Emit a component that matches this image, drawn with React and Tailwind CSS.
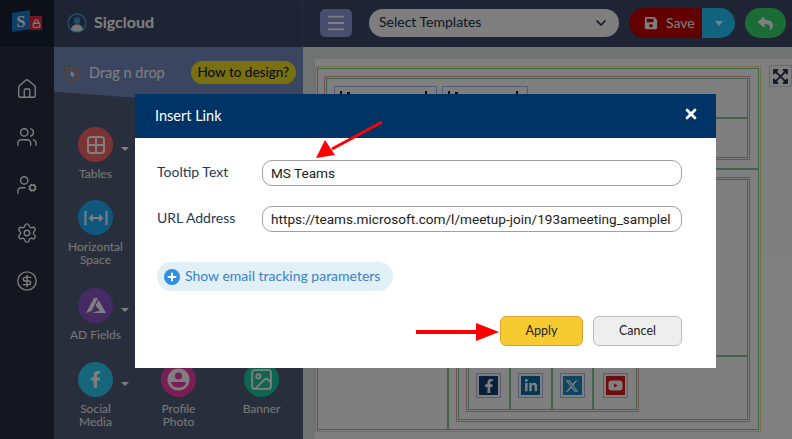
import React from 'react';
import { Home, Users, UserCog, Settings, CircleDollarSign, ChevronDown, Menu, X, Plus, Image, Lock } from 'lucide-react';
import { FaSave, FaReply, FaFacebookF, FaLinkedinIn, FaYoutube, FaExpandArrowsAlt } from 'react-icons/fa';
import { FaXTwitter } from 'react-icons/fa6';

const Tool = ({ bg, icon, label, caret }) => (
    <div className="relative flex flex-col items-center text-[12px] leading-[13px] text-center text-[#f2f2f2]">
        <div className={`w-[35px] h-[35px] rounded-full flex items-center justify-center text-white ${bg}`}>{icon}</div>
        {caret && <span className="absolute left-[67px] top-[20px] w-0 h-0 border-x-[4px] border-x-transparent border-t-[4px] border-t-white" />}
        <div className="mt-[5px]">{label}</div>
    </div>
);

const SocialCell = ({ bg, children, last }) => (
    <div className={`w-[42px] h-[47px] flex items-center justify-center ${last ? '' : 'border-r-2 border-[#7fc98f]'}`}>
        <div className="w-[25px] h-[25px] border border-[#a9b8f0] p-[2px]">
            <div className={`w-full h-full flex items-center justify-center text-white ${bg}`}>{children}</div>
        </div>
    </div>
);

// dropdown cell of the template, only its top edge shows above the dialog
const TemplateBox = ({ width }) => (
    <div className={`${width} h-[26px] border border-[#a9b8f0] flex justify-between pl-[5px] pr-[9px] pt-[4px]`}>
        <div className="flex gap-[5px]">
            <span className="w-[2px] h-[3px] bg-[#111]" />
            <span className="w-[3px] h-[2px] mt-px bg-[#111]" />
        </div>
        <span className="w-[2px] h-[3px] bg-[#111]" />
    </div>
);

const App = () => {
    return (
        <div className="relative w-[792px] h-[439px] overflow-hidden flex font-['Lato',sans-serif]">
            {/* icon rail */}
            <div className="w-[54px] bg-[#282e3e] flex flex-col items-center text-white shrink-0">
                <div className="w-full h-[47px] flex items-start pl-[12px] pt-[10px] bg-[#182030] shrink-0">
                    <svg width="18" height="22" viewBox="0 0 18 22">
                        <polygon points="0,3 18,0 18,19 0,22" fill="#1480d0" />
                        <text x="9" y="17" textAnchor="middle" fontSize="16" fontWeight="700" fill="white" fontFamily="Liberation Serif, serif">S</text>
                    </svg>
                    <div className="w-[12px] h-[14px] mt-[6px] bg-[#e8283c] flex items-center justify-center">
                        <Lock size={9} strokeWidth={3} />
                    </div>
                </div>
                <div className="flex flex-col items-center gap-[26px] pt-[31px]">
                    <Home size={22} strokeWidth={1.5} />
                    <Users size={22} strokeWidth={1.5} />
                    <UserCog size={22} strokeWidth={1.5} />
                    <Settings size={22} strokeWidth={1.5} />
                    <CircleDollarSign size={22} strokeWidth={1.5} />
                </div>
            </div>

            <div className="flex-1 flex flex-col min-w-0">
                {/* top bar */}
                <div className="h-[47px] bg-[#3c4866] flex items-center pb-px shrink-0">
                    <div className="w-[249px] flex items-center pl-[13px] gap-[7px] text-white border-r border-dotted border-[#5a6478] h-full">
                        <svg width="20" height="20" viewBox="0 0 20 20">
                            <circle cx="10" cy="10" r="9" fill="none" stroke="#3aa0d0" strokeWidth="1.5" />
                            <circle cx="10" cy="7.5" r="3.2" fill="#3aa0d0" />
                            <path d="M4 16.5c.6-3.6 3-5 6-5s5.4 1.4 6 5a9 9 0 0 1-12 0z" fill="#dfe8f0" />
                        </svg>
                        <span className="text-[16px] font-bold pb-[3px]">Sigcloud</span>
                    </div>
                    <div className="w-[32px] h-[28px] ml-[17px] rounded-[5px] bg-[#8f9fd8] flex items-center justify-center text-white">
                        <Menu size={22} strokeWidth={2} />
                    </div>
                    <div className="w-[250px] h-[28px] ml-[17px] rounded-full bg-[#fdfdfd] flex items-center justify-between px-[10px] text-[#1a2a44] text-[14px]">
                        <span className="pb-[3px]">Select Templates</span>
                        <ChevronDown size={16} strokeWidth={2.5} />
                    </div>
                    <div className="ml-[10px] h-[30px] w-[73px] rounded-l-full bg-[#c40000] flex items-center pl-[15px] gap-[8px] text-white text-[14px]">
                        <FaSave size={14} />
                        <span className="pb-[2px]">Save</span>
                    </div>
                    <div className="h-[30px] w-[33px] rounded-r-full bg-[#20c8ff] flex items-center justify-center">
                        <span className="w-0 h-0 border-x-[4px] border-x-transparent border-t-[5px] border-t-white" />
                    </div>
                    <div className="ml-[10px] h-[30px] w-[41px] rounded-full bg-[#38d870] flex items-center justify-center text-white">
                        <FaReply size={15} />
                    </div>
                </div>

                <div className="flex-1 flex min-h-0">
                    {/* tools panel */}
                    <div className="w-[249px] bg-[#505c78] shrink-0 flex flex-col overflow-hidden">
                        <div className="h-[63px] bg-[#748ac0] flex items-start pt-[14px] pl-[10px] text-white shrink-0 [clip-path:polygon(0_0,100%_0,100%_100%,0_71%)]">
                            <svg width="15" height="19" viewBox="0 0 15 19" className="mr-[10px] mt-[2px]">
                                <path d="M0 1h12" stroke="#30c040" strokeWidth="1.5" strokeDasharray="2 3" />
                                <rect x="3" y="5" width="11" height="12" fill="none" stroke="#f08030" strokeWidth="1.5" strokeDasharray="2 1" />
                                <path d="M7 8l4 3.5-2.2.4L9.6 14l-1 .3-.8-2L6.5 13z" fill="white" />
                            </svg>
                            <span className="text-[14.5px] leading-[23px]">Drag n drop</span>
                            <span className="ml-[26px] h-[23px] w-[105px] rounded-full bg-[#f4e020] text-[#12203a] text-[13.5px] font-medium flex items-center justify-center">How to design?</span>
                        </div>
                        <div className="grid grid-cols-3 grid-rows-[73px_88px_74px_1fr] pt-[17px]">
                            <Tool bg="bg-[#f86666]" label="Tables" caret icon={
                                <svg width="20" height="20" viewBox="0 0 20 20" fill="none" stroke="white" strokeWidth="2">
                                    <rect x="2" y="2" width="16" height="16" rx="3" />
                                    <path d="M10 2v16M2 10h16" />
                                </svg>
                            } />
                            <div />
                            <div />
                            <Tool bg="bg-[#1eaef8]" label={<>Horizontal<br />Space</>} icon={
                                <svg width="24" height="16" viewBox="0 0 24 16" fill="white" stroke="white">
                                    <path d="M1.5 1v14M22.5 1v14" strokeWidth="2" fill="none" />
                                    <path d="M7 8h10" strokeWidth="2" />
                                    <path d="M9 4L4.5 8 9 12zM15 4l4.5 4-4.5 4z" strokeWidth="0" />
                                </svg>
                            } />
                            <div />
                            <div />
                            <Tool bg="bg-[#8a54cc]" label="AD Fields" caret icon={
                                <svg width="20" height="16" viewBox="0 0 20 16" fill="white">
                                    <polygon points="8,0 12,0 5.5,13 0,15" />
                                    <polygon points="12.5,2 20,15 6,15 14,12.5 9.5,7.5" />
                                </svg>
                            } />
                            <div />
                            <div />
                            <Tool bg="bg-[#2ecef8]" label={<>Social<br />Media</>} caret icon={<FaFacebookF size={17} />} />
                            <Tool bg="bg-[#f43eaa]" label={<>Profile<br />Photo</>} icon={
                                <svg width="23" height="23" viewBox="0 0 23 23">
                                    <circle cx="11.5" cy="11.5" r="11" fill="white" />
                                    <circle cx="11.5" cy="8" r="3.6" fill="#f43eaa" />
                                    <path d="M4 14h15c0 3.6-3.4 5.6-7.5 5.6S4 17.6 4 14z" fill="#f43eaa" />
                                </svg>
                            } />
                            <Tool bg="bg-[#18cca0]" label="Banner" icon={<Image size={25} strokeWidth={1.8} />} />
                        </div>
                    </div>

                    {/* canvas */}
                    <div className="flex-1 bg-[#dfe8e6] pt-[12px] pl-[12px] min-w-0">
                        <div className="relative h-full bg-white pt-[7px]">
                            <div className="w-[446px] h-[366px] border border-[#f0e090] p-px">
                                <div className="h-full border border-[#7fc98f] pt-[7px] flex flex-col">
                                    <div className="ml-[6px] mr-[8px] h-[84px] border border-[#f0a0b0] p-px shrink-0">
                                        <div className="h-full border border-[#7fc98f]">
                                            <div className="h-[40px] border-b-2 border-[#7fc98f] pl-[7px] pt-[7px] flex gap-[5px]">
                                                <TemplateBox width="w-[103px]" />
                                                <TemplateBox width="w-[86px]" />
                                            </div>
                                        </div>
                                    </div>
                                    <div className="flex-1 flex mt-[8px] border-t-2 border-[#7fc98f] min-h-0">
                                        <div className="w-[131px] border-r-2 border-[#7fc98f]" />
                                        <div className="flex-1 pl-[7px] pr-[8px] pb-[7px] pt-[7px]">
                                            <div className="h-full border border-[#f0a0b0] p-px">
                                                <div className="h-full border border-[#7fc98f] flex flex-col">
                                                    <div className="flex-1 border-b-2 border-[#7fc98f]" />
                                                    <div className="pl-[7px] pb-[7px] pt-px">
                                                        <div className="w-[173px] border border-[#f0a0b0] p-px">
                                                            <div className="h-[50px] border border-[#7fc98f] flex items-end">
                                                                <SocialCell bg="bg-[#13407a]"><FaFacebookF size={14} /></SocialCell>
                                                                <SocialCell bg="bg-[#0a6ca8]"><FaLinkedinIn size={14} /></SocialCell>
                                                                <SocialCell bg="bg-[#1a8ac8]"><FaXTwitter size={14} /></SocialCell>
                                                                <SocialCell bg="bg-[#d81818]" last><FaYoutube size={15} /></SocialCell>
                                                            </div>
                                                        </div>
                                                    </div>
                                                </div>
                                            </div>
                                        </div>
                                    </div>
                                </div>
                            </div>
                            <div className="absolute left-[454px] top-[6px] w-[23px] h-[22px] border border-[#cfd4d8] flex items-center justify-center text-[#2a3450]">
                                <FaExpandArrowsAlt size={17} />
                            </div>
                        </div>
                    </div>
                </div>
            </div>

            {/* dim layer */}
            <div className="absolute inset-0 bg-black/50" />

            {/* modal */}
            <div className="absolute left-[135px] top-[94px] w-[581px] h-[274px] bg-white flex flex-col">
                <div className="h-[44px] bg-[#003366] flex items-center justify-between pl-[20px] pr-[17px] text-white shrink-0">
                    <span className="text-[14.5px]">Insert Link</span>
                    <X size={16} strokeWidth={4} className="mb-[5px]" />
                </div>
                <div className="flex-1 pl-[22px] pr-[34px] pt-[22px]">
                    <div className="flex items-center h-[26px] text-[14px] text-[#1e3a55]">
                        <label className="w-[105px] pb-[3px]">Tooltip Text</label>
                        <div className="flex-1 h-full border border-[#a0a0a0] rounded-[10px] pl-[8px] flex items-center font-['Roboto',sans-serif] text-[13.6px] text-[#222]">MS Teams</div>
                    </div>
                    <div className="flex items-center h-[26px] mt-[20px] text-[14px] text-[#1e3a55]">
                        <label className="w-[105px] pb-[3px]">URL Address</label>
                        <div className="flex-1 h-full border border-[#a0a0a0] rounded-[10px] pl-[8px] flex items-center font-['Roboto',sans-serif] text-[13.6px] text-[#222] whitespace-nowrap overflow-hidden">https://teams.microsoft.com/l/meetup-join/193ameeting_samplel</div>
                    </div>
                    <div className="mt-[30px] inline-flex items-center h-[29px] w-[236px] rounded-full bg-[#e1eff7] pl-[7px] gap-[5px] text-[14px] text-[#3b82c4]">
                        <span className="w-[16px] h-[16px] rounded-full bg-[#2f8fe0] flex items-center justify-center text-white"><Plus size={12} strokeWidth={4} /></span>
                        <span className="pb-[2px]">Show email tracking parameters</span>
                    </div>
                    <div className="flex justify-end gap-[10px] mt-[25px]">
                        <button className="w-[83px] h-[30px] rounded-[6px] bg-[#f6cb30] border border-[#e0a030] text-[12.5px] text-[#222]">Apply</button>
                        <button className="w-[89px] h-[30px] rounded-[6px] bg-[#eeeeee] border border-[#bbbbbb] text-[12.5px] text-[#222]">Cancel</button>
                    </div>
                </div>
            </div>

            {/* annotation arrows */}
            <svg className="absolute left-0 top-0 pointer-events-none" width="792" height="439">
                <line x1="382" y1="122" x2="332" y2="149" stroke="#ff0000" strokeWidth="3" />
                <polygon points="316,158 325,140 335,155" fill="#ff0000" />
                <line x1="416" y1="332" x2="478" y2="332" stroke="#ff0000" strokeWidth="4" />
                <polygon points="499,332 476,323 476,341" fill="#ff0000" />
            </svg>
        </div>
    );
};

export default App;
